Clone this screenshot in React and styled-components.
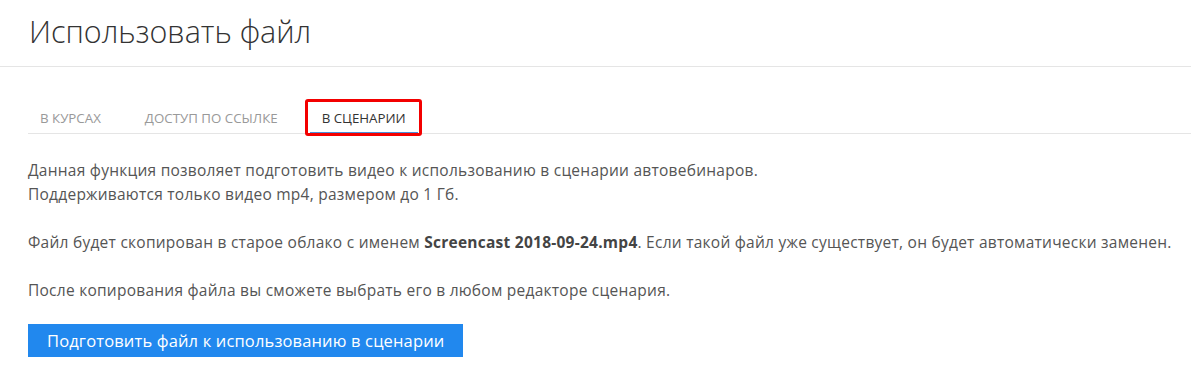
import React from "react";
import styled, { createGlobalStyle } from "styled-components";

const GlobalStyle = createGlobalStyle`
  body {
    margin: 0;
    background: #fff;
    font-family: "Open Sans", "Noto Sans", sans-serif;
  }
`;

const Header = styled.div`
  height: 67px;
  border-bottom: 1px solid #e5e5e5;
  padding: 0 0 5px 29px;
  display: flex;
  align-items: center;
  box-sizing: border-box;

  h1 {
    margin: 0;
    font-size: 30.5px;
    font-weight: 300;
    color: #333;
  }
`;

const Content = styled.div`
  padding: 33px 0 0 28px;
`;

const Tabs = styled.div`
  display: flex;
  gap: 20px;
  border-bottom: 1px solid #e5e5e5;
`;

const Tab = styled.div`
  position: relative;
  padding: 9px 12px 5px;
  font-size: 13.3px;
  color: ${(p) => (p.$active ? "#333" : "#999")};
  border-bottom: 2px solid ${(p) => (p.$active ? "#4a8fd9" : "transparent")};
  margin-bottom: -1px;
  white-space: nowrap;

  ${(p) =>
    p.$highlight &&
    `
    &::after {
      content: "";
      position: absolute;
      left: -5px;
      right: -4px;
      top: -1px;
      bottom: -4px;
      border: 3px solid #f30000;
      border-radius: 3px;
    }
  `}
`;

const Text = styled.div`
  margin-top: 24px;
  font-size: 15.5px;
  letter-spacing: 0.25px;
  line-height: 24px;
  color: #555;

  p {
    margin: 0 0 24px;
  }

  p:last-child {
    margin-bottom: 0;
  }

  b {
    color: #444;
  }
`;

const Button = styled.button`
  margin-top: 22px;
  height: 33px;
  padding: 0 19px;
  border: none;
  background: #2188ee;
  color: #fff;
  font-family: inherit;
  font-size: 16.5px;
  letter-spacing: 0.15px;
  cursor: pointer;
`;

export default function App() {
  return (
    <>
      <GlobalStyle />
      <Header>
        <h1>Использовать файл</h1>
      </Header>
      <Content>
        <Tabs>
          <Tab>В КУРСАХ</Tab>
          <Tab>ДОСТУП ПО ССЫЛКЕ</Tab>
          <Tab $active $highlight>
            В СЦЕНАРИИ
          </Tab>
        </Tabs>
        <Text>
          <p>
            Данная функция позволяет подготовить видео к использованию в сценарии автовебинаров.
            <br />
            Поддерживаются только видео mp4, размером до 1 Гб.
          </p>
          <p>
            Файл будет скопирован в старое облако с именем <b>Screencast 2018-09-24.mp4</b>. Если
            такой файл уже существует, он будет автоматически заменен.
          </p>
          <p>После копирования файла вы сможете выбрать его в любом редакторе сценария.</p>
        </Text>
        <Button>Подготовить файл к использованию в сценарии</Button>
      </Content>
    </>
  );
}
